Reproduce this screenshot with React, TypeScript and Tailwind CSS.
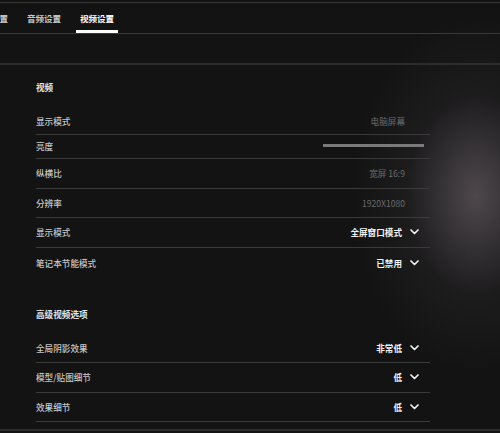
const font = { fontFamily: '"Noto Sans CJK SC", "Noto Sans", sans-serif' };

type Row = {
  label: string;
  h: string;
  kind: "static" | "slider" | "select";
  value?: string;
  line?: boolean;
};

// heights include the 1px bottom rule (border-box)
const videoRows: Row[] = [
  { label: "显示模式", h: "h-[27px]", kind: "static", value: "电脑屏幕", line: true },
  { label: "亮度", h: "h-[24px]", kind: "slider", line: true },
  { label: "纵横比", h: "h-[30px]", kind: "static", value: "宽屏 16:9", line: true },
  { label: "分辨率", h: "h-[29px]", kind: "static", value: "1920X1080", line: true },
  { label: "显示模式", h: "h-[30px]", kind: "select", value: "全屏窗口模式", line: true },
  { label: "笔记本节能模式", h: "h-[30px]", kind: "select", value: "已禁用" },
];

const advancedRows: Row[] = [
  { label: "全局阴影效果", h: "h-[28px]", kind: "select", value: "非常低", line: true },
  { label: "模型/贴图细节", h: "h-[30px]", kind: "select", value: "低", line: true },
  { label: "效果细节", h: "h-[29px]", kind: "select", value: "低", line: true },
];

function Chevron() {
  return (
    <svg width="9" height="6" viewBox="0 0 9 6" className="ml-[8px]">
      <path d="M1 1 L4.5 4.5 L8 1" fill="none" stroke="#f2f2f2" strokeWidth="1.7" strokeLinecap="round" strokeLinejoin="round" />
    </svg>
  );
}

function SettingRow({ row }: { row: Row }) {
  return (
    <div className={`flex items-center justify-between ${row.h} ${row.line ? "border-b border-[#3a3a3a]" : ""}`}>
      <span className="text-[8.6px] font-medium text-[#c6c6c6]">{row.label}</span>
      {row.kind === "static" && (
        <span className="text-[8.6px] text-[#6a6a6a] mr-[25px]">{row.value}</span>
      )}
      {row.kind === "slider" && <div className="h-[3px] w-[101px] bg-[#7a7a7a] mr-[6px] mt-[-2px]" />}
      {row.kind === "select" && (
        <div className="flex items-center mr-[11px]">
          <span className="text-[8.6px] font-bold text-[#f2f2f2]">{row.value}</span>
          <Chevron />
        </div>
      )}
    </div>
  );
}

export default function App() {
  return (
    <div className="relative w-[500px] h-[433px] overflow-hidden bg-[#131313]" style={font}>
      {/* soft light on the right side */}
      <div className="absolute inset-0 pointer-events-none bg-[radial-gradient(ellipse_125px_180px_at_476px_195px,rgba(98,90,96,0.75),rgba(45,42,45,0.4)_55%,transparent_100%)]" />

      <div className="relative">
        <div className="h-[2px]" />
        <div className="border-t border-[#353535]" />

        {/* tabs */}
        <div className="flex h-[31px] gap-[19px] ml-[-26px] border-b border-[#3a3a3a]">
          {["显示设置", "音频设置", "视频设置"].map((t, i) => (
            <div
              key={t}
              className={`flex items-center pt-[3px] border-b-[3px] px-[4px] -mx-[4px] text-[8.5px] font-bold ${
                i === 2 ? "border-white text-white" : "border-transparent text-[#c8c8c8]"
              }`}
            >
              {t}
            </div>
          ))}
        </div>

        <div className="h-[29px]" />
        <div className="border-t-2 border-[#2c2c2c]" />

        <div className="pl-[36px] pr-[70px]">
          <div className="flex items-center h-[22px] mt-[11px] mb-[10px] text-[8.6px] font-bold text-[#e4e4e4]">视频</div>
          {videoRows.map((r, i) => (
            <SettingRow key={i} row={r} />
          ))}

          <div className="flex items-center h-[22px] mt-[25px] mb-[10px] text-[8.6px] font-bold text-[#e4e4e4]">高级视频选项</div>
          {advancedRows.map((r, i) => (
            <SettingRow key={i} row={r} />
          ))}
        </div>

        <div className="h-[7px]" />
        <div className="border-t-2 border-[#2c2c2c]" />
      </div>
    </div>
  );
}
